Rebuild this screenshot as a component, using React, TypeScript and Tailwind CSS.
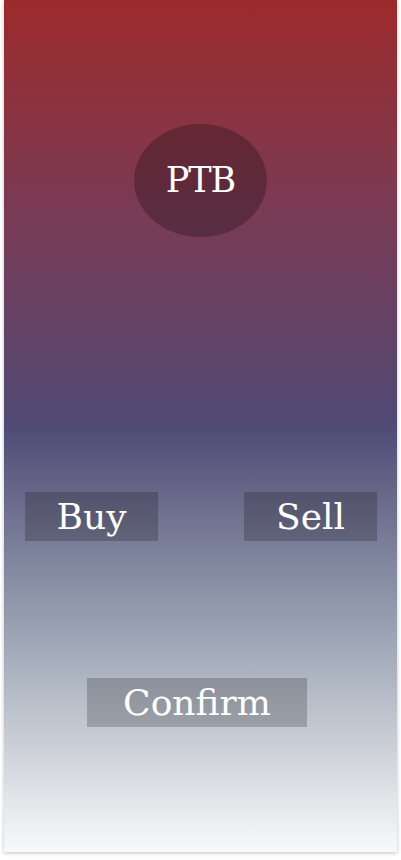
import React from 'react';

const Action = ({ label, className = '' }: { label: string; className?: string }) => (
    <button className={`h-[49px] bg-black/20 text-white text-[36px] leading-none ${className}`}>{label}</button>
);

export default function App() {
    return (
        <div className="min-h-[860px] bg-white px-1 pb-2" style={{ fontFamily: '"DejaVu Serif", serif' }}>
            <div className="h-[852px] flex flex-col shadow-[0_1px_4px_rgba(0,0,0,0.25)] bg-[linear-gradient(to_bottom,#9c2a2b_0%,#7a3b55_25%,#504a75_50%,#8f99ab_71%,#f8f9f9_100%)]">
                <div className="pt-[124px] flex justify-center">
                    <div className="w-[133px] h-[113px] rounded-[50%] bg-black/25 flex items-center justify-center text-white text-[35px] tracking-[-1px]">
                        PTB
                    </div>
                </div>
                <div className="mt-[255px] flex justify-between pl-[21px] pr-[20px]">
                    <Action label="Buy" className="w-[133px]" />
                    <Action label="Sell" className="w-[133px]" />
                </div>
                <div className="mt-[137px] pl-[83px]">
                    <Action label="Confirm" className="w-[220px]" />
                </div>
            </div>
        </div>
    );
}
